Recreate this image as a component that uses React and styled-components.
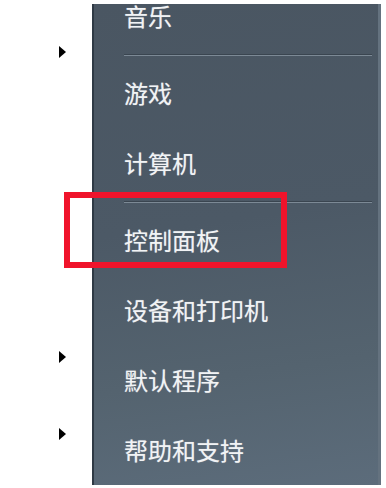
import styled, { createGlobalStyle } from "styled-components";

const GlobalStyle = createGlobalStyle`
  html, body {
    margin: 0;
    padding: 0;
    background: #fff;
  }
  body {
    font-family: "Noto Sans CJK SC", "Noto Sans", sans-serif;
  }
`;

const leftArrows = [46, 293, 65];

const items = [
  { label: "音乐", first: true },
  { label: "游戏", separatorBefore: true },
  { label: "计算机" },
  { label: "控制面板", separatorBefore: true },
  { label: "设备和打印机" },
  { label: "默认程序" },
  { label: "帮助和支持" },
];

function App() {
  return (
    <>
      <GlobalStyle />
      <Screen>
        <LeftColumn>
          {leftArrows.map((gap, i) => (
            <Arrow key={i} $gap={gap} />
          ))}
        </LeftColumn>
        <Panel>
          {items.map((item) => (
            <div key={item.label}>
              {item.separatorBefore && (
                <SeparatorRow>
                  <Line />
                </SeparatorRow>
              )}
              <MenuItem $first={item.first}>{item.label}</MenuItem>
            </div>
          ))}
        </Panel>
        <Highlight />
      </Screen>
    </>
  );
}

export default App;

const Screen = styled.div`
  position: relative;
  display: flex;
  width: 386px;
  height: 488px;
  overflow: hidden;
  background: #fff;
`;

const LeftColumn = styled.div`
  width: 92px;
  flex-shrink: 0;
  display: flex;
  flex-direction: column;
  align-items: flex-start;
  padding-left: 59px;
  box-sizing: border-box;
`;

const Arrow = styled.div`
  margin-top: ${(p) => p.$gap}px;
  width: 0;
  height: 0;
  border-left: 7px solid #000;
  border-top: 6px solid transparent;
  border-bottom: 6px solid transparent;
`;

const Panel = styled.div`
  margin-top: 4px;
  width: 289px;
  height: 481px;
  box-sizing: border-box;
  border-left: 2px solid #2f3a45;
  border-right: 3px solid #64727f;
  padding: 0 6px 0 30px;
  overflow: hidden;
  background: linear-gradient(172deg, #4a5662 0%, #4c5966 45%, #54636f 75%, #5c6c7b 100%);
`;

const MenuItem = styled.div`
  height: 70px;
  line-height: 70px;
  margin-top: ${(p) => (p.$first ? "-23px" : "0")};
  color: #f1f3f5;
  font-size: 24px;
  font-weight: 400;
  white-space: nowrap;
  text-shadow: 0 0 1px rgba(255, 255, 255, 0.45);
`;

const SeparatorRow = styled.div`
  height: 7px;
  display: flex;
  align-items: center;
`;

const Line = styled.div`
  width: 248px;
  height: 0;
  border-top: 1px solid #3a4550;
  border-bottom: 1px solid #7c8995;
`;

const Highlight = styled.div`
  position: absolute;
  left: 64px;
  top: 192px;
  width: 223px;
  height: 76px;
  box-sizing: border-box;
  border: 6px solid #f0142b;
`;
